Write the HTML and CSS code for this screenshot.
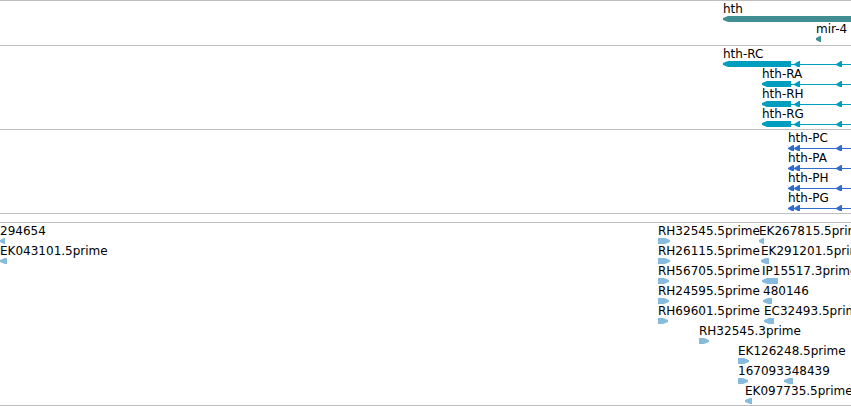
FILE: index.html
```html
<!DOCTYPE html>
<html lang="en">
<head>
    <meta charset="UTF-8">
    <meta name="viewport" content="width=device-width, initial-scale=1.0">
    <title>Genome Browser - hth</title>
    <link rel="stylesheet" href="styles.css">
</head>
<body>
    <main class="browser" id="browser"></main>
    <script src="tracks.js"></script>
</body>
</html>
```
FILE: styles.css
```css
body {
    margin: 0;
    background: #fff;
    color: #000;
    font-family: "DejaVu Sans", Verdana, sans-serif;
    font-size: 12px;
}
.browser {
    overflow: hidden;
    border-bottom: 1px solid #bebebe;
}
.track {
    padding-bottom: 3px;
    border-top: 1px solid #bebebe;
}
.gene {
    padding-bottom: 4px;
    color: #408e91;
}
.transcript {
    color: #009ebe;
}
.cds {
    color: #2f6ccc;
}
.est {
    margin-top: 8px;
    padding-bottom: 2px;
    color: #87bbde;
}
.end {
    border-top: 1px solid #bebebe;
}
.row {
    display: grid;
    height: 20px;
}
.feature {
    grid-area: 1 / 1;
    min-width: 0;
    white-space: nowrap;
}
.label {
    display: block;
    height: 15px;
    line-height: 16px;
    color: #000;
}
.glyph {
    display: block;
    width: 100%;
    height: 6px;
    fill: currentColor;
}
```
FILE: tracks.js
```js
// start and length are in pixels; dir is the strand the feature is on
const tracks = [
    { type: "gene", rows: [
        [{ name: "hth", start: 723 }],
        [{ name: "mir-4", start: 816, length: 5, dir: "left" }]
    ]},
    { type: "transcript", rows: [
        [{ name: "hth-RC", start: 723, exon: 68 }],
        [{ name: "hth-RA", start: 762, exon: 29 }],
        [{ name: "hth-RH", start: 762, exon: 29 }],
        [{ name: "hth-RG", start: 762, exon: 29 }]
    ]},
    { type: "cds", rows: [
        [{ name: "hth-PC", start: 788 }],
        [{ name: "hth-PA", start: 788 }],
        [{ name: "hth-PH", start: 788 }],
        [{ name: "hth-PG", start: 788 }]
    ]},
    { type: "est", rows: [
        [
            { name: "294654", start: 0, length: 5, dir: "left" },
            { name: "RH32545.5prime", start: 658, length: 12, dir: "right" },
            { name: "EK267815.5prime", start: 759, length: 5, dir: "left" }
        ],
        [
            { name: "EK043101.5prime", start: 0, length: 7, dir: "left" },
            { name: "RH26115.5prime", start: 658, length: 12, dir: "right" },
            { name: "EK291201.5prime", start: 761, length: 8, dir: "left" }
        ],
        [
            { name: "RH56705.5prime", start: 658, length: 11, dir: "right" },
            { name: "IP15517.3prime", start: 762, length: 16, dir: "left" }
        ],
        [
            { name: "RH24595.5prime", start: 658, length: 11, dir: "right" },
            { name: "480146", start: 763, length: 9, dir: "left" }
        ],
        [
            { name: "RH69601.5prime", start: 658, length: 10, dir: "right" },
            { name: "EC32493.5prime", start: 764, length: 10, dir: "left" }
        ],
        [{ name: "RH32545.3prime", start: 699, length: 10, dir: "right" }],
        [{ name: "EK126248.5prime", start: 738, length: 11, dir: "right" }],
        [
            { name: "167093", start: 738, length: 10, dir: "right" },
            { name: "348439", start: 784, length: 9, dir: "left" }
        ],
        [{ name: "EK097735.5prime", start: 745, length: 7, dir: "left" }]
    ]}
];

// strand arrows drawn along the introns
const introns = [794, 836];

function arrow(x) {
    return `<path d="M${x} 3 V4 L${x + 4} 6 H${x + 6} V0 H${x + 5} Z"/>`;
}

function drawGlyph(type, f) {
    if (f.dir === "left") {
        const tip = Math.min(5, f.length - 1);
        return `<path d="M0 2 L${tip} 0 H${f.length} V6 H${tip} L0 4 Z"/>`;
    }
    if (f.dir === "right") {
        return `<path d="M0 0 H${f.length - 5} L${f.length} 2 V4 L${f.length - 5} 6 H0 Z"/>`;
    }
    if (type === "gene") {
        return `<path d="M0 2 L5 0 V6 L0 4 Z"/><rect x="5" width="100%" height="6"/>`;
    }
    const arrows = introns.map(x => arrow(x - f.start)).join("");
    if (type === "transcript") {
        return `<path d="M0 2 L5 0 H${f.exon} V6 H5 L0 4 Z"/><rect x="${f.exon}" y="3" width="100%" height="1"/>${arrows}`;
    }
    return `<rect y="3" width="100%" height="1"/>${arrow(0)}${arrows}`;
}

document.getElementById("browser").innerHTML = tracks.map(track => `
    ${track.type === "est" ? '<div class="end"></div>' : ""}
    <section class="track ${track.type}">
        ${track.rows.map(row => `<div class="row">${row.map(f => `
            <div class="feature" style="margin-left: ${f.start}px">
                <span class="label">${f.name}</span>
                <svg class="glyph" aria-hidden="true">${drawGlyph(track.type, f)}</svg>
            </div>`).join("")}
        </div>`).join("")}
    </section>`).join("");
```
